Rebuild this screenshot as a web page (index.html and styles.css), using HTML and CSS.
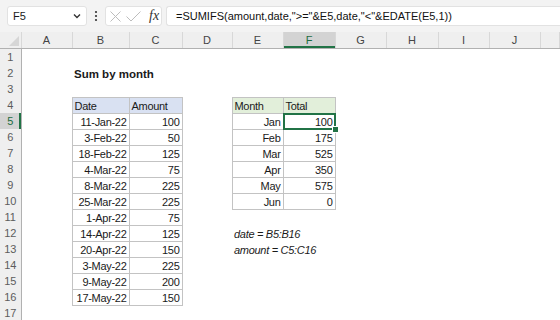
FILE: index.html
```html
<!DOCTYPE html>
<html lang="en">
<head>
    <meta charset="UTF-8">
    <title>Sum by month</title>
    <link rel="stylesheet" href="styles.css">
</head>
<body>
    <div class="topbar">
        <div class="namebox">
            <span>F5</span>
            <svg width="10" height="10" viewBox="0 0 10 10"><polyline points="2,3.5 5,6.5 8,3.5" fill="none" stroke="#333" stroke-width="1.4"/></svg>
        </div>
        <div class="dots">
            <svg width="4" height="12" viewBox="0 0 4 12"><circle cx="2" cy="2" r="1.1" fill="#333"/><circle cx="2" cy="6" r="1.1" fill="#333"/><circle cx="2" cy="10" r="1.1" fill="#333"/></svg>
        </div>
        <div class="fxbox">
            <svg class="cancel" width="11" height="11" viewBox="0 0 11 11"><path d="M0.5 0.5 L10.5 10.5 M10.5 0.5 L0.5 10.5" stroke="#bdbdbd" stroke-width="1"/></svg>
            <svg class="enter" width="15" height="11" viewBox="0 0 15 11"><polyline points="0.5,5.5 5,10 14.5,0.5" fill="none" stroke="#bdbdbd" stroke-width="1"/></svg>
            <span class="fx">fx</span>
        </div>
        <div class="formula">=SUMIFS(amount,date,"&gt;="&amp;E5,date,"&lt;"&amp;EDATE(E5,1))</div>
    </div>

    <table class="sheet">
        <colgroup>
            <col style="width:21px"><col style="width:51px"><col style="width:57px"><col style="width:53px">
            <col style="width:50px"><col style="width:51px"><col style="width:52px"><col style="width:51px">
            <col style="width:52px"><col style="width:51px"><col style="width:51px"><col>
        </colgroup>
        <thead>
            <tr>
                <th class="corner"><span class="tri"></span></th>
                <th>A</th><th>B</th><th>C</th><th>D</th><th>E</th>
                <th class="sel">F</th><th>G</th><th>H</th><th>I</th><th>J</th><th></th>
            </tr>
        </thead>
        <tbody>
            <tr><td class="rh">1</td></tr>
            <tr><td class="rh">2</td><td></td><td class="title" colspan="2">Sum by month</td></tr>
            <tr><td class="rh">3</td></tr>
            <tr><td class="rh">4</td><td></td><td class="box blue">Date</td><td class="box blue">Amount</td><td></td><td class="box green">Month</td><td class="box green">Total</td></tr>
            <tr><td class="rh sel">5</td><td></td><td class="box num">11-Jan-22</td><td class="box num">100</td><td></td><td class="box num">Jan</td><td class="box num active">100<span class="cursor"></span><span class="handle"></span></td></tr>
            <tr><td class="rh">6</td><td></td><td class="box num">3-Feb-22</td><td class="box num">50</td><td></td><td class="box num">Feb</td><td class="box num">175</td></tr>
            <tr><td class="rh">7</td><td></td><td class="box num">18-Feb-22</td><td class="box num">125</td><td></td><td class="box num">Mar</td><td class="box num">525</td></tr>
            <tr><td class="rh">8</td><td></td><td class="box num">4-Mar-22</td><td class="box num">75</td><td></td><td class="box num">Apr</td><td class="box num">350</td></tr>
            <tr><td class="rh">9</td><td></td><td class="box num">8-Mar-22</td><td class="box num">225</td><td></td><td class="box num">May</td><td class="box num">575</td></tr>
            <tr><td class="rh">10</td><td></td><td class="box num">25-Mar-22</td><td class="box num">225</td><td></td><td class="box num">Jun</td><td class="box num">0</td></tr>
            <tr><td class="rh">11</td><td></td><td class="box num">1-Apr-22</td><td class="box num">75</td></tr>
            <tr><td class="rh">12</td><td></td><td class="box num">14-Apr-22</td><td class="box num">125</td><td></td><td class="note">date = B5:B16</td></tr>
            <tr><td class="rh">13</td><td></td><td class="box num">20-Apr-22</td><td class="box num">150</td><td></td><td class="note">amount = C5:C16</td></tr>
            <tr><td class="rh">14</td><td></td><td class="box num">3-May-22</td><td class="box num">225</td></tr>
            <tr><td class="rh">15</td><td></td><td class="box num">9-May-22</td><td class="box num">200</td></tr>
            <tr><td class="rh">16</td><td></td><td class="box num">17-May-22</td><td class="box num">150</td></tr>
            <tr><td class="rh">17</td></tr>
        </tbody>
    </table>
</body>
</html>
```

FILE: styles.css
```css
body {
    margin: 0;
    background-color: #fff;
    font-family: "Liberation Sans", Arial, sans-serif;
    color: #1a1a1a;
    overflow: hidden;
}
/* Formula bar */
.topbar {
    height: 32px;
    box-sizing: border-box;
    background-color: #f3f3f3;
    display: flex;
    align-items: center;
    padding-left: 7px;
    font-size: 11px;
}
.namebox {
    width: 80px;
    height: 20px;
    box-sizing: border-box;
    background-color: #fff;
    border: 1px solid #e2e2e2;
    border-radius: 3px;
    display: flex;
    align-items: center;
    justify-content: space-between;
    padding: 0 4px 0 5px;
}
.dots {
    width: 18px;
    display: flex;
    justify-content: center;
}
.fxbox {
    width: 57px;
    height: 20px;
    box-sizing: border-box;
    background-color: #fff;
    border: 1px solid #e2e2e2;
    border-radius: 3px;
    display: flex;
    align-items: center;
    padding-left: 4px;
}
.fxbox .enter {
    margin-left: 5px;
}
.fx {
    font-family: "Liberation Serif", serif;
    font-style: italic;
    font-size: 14px;
    color: #333;
    margin-left: 8px;
}
.formula {
    flex: 1;
    height: 20px;
    box-sizing: border-box;
    margin-left: 4px;
    background-color: #fff;
    border: 1px solid #e2e2e2;
    border-right: none;
    border-radius: 3px 0 0 3px;
    padding-left: 9px;
    line-height: 18px;
    white-space: nowrap;
    color: #111;
}
/* Grid */
.sheet {
    border-collapse: collapse;
    table-layout: fixed;
    width: 560px;
}
.sheet th {
    height: 16px;
    padding: 0;
    background-color: #efefef;
    border-right: 1px solid #d8d8d8;
    border-bottom: 1px solid #b1b1b1;
    font-weight: normal;
    font-size: 11px;
    color: #444;
}
.sheet th.sel {
    background-color: #d3d3d3;
    color: #1d6b40;
    box-shadow: inset 0 -2px 0 #217346;
}
.corner {
    position: relative;
}
.tri {
    position: absolute;
    right: 2px;
    bottom: 2px;
    border-left: 10px solid transparent;
    border-bottom: 10px solid #d6d6d6;
}
.sheet td {
    height: 16px;
    padding: 0 2px;
    font-size: 11px;
    letter-spacing: -0.3px;
    line-height: 14px;
    white-space: nowrap;
    vertical-align: bottom;
}
.sheet td.rh {
    padding: 0;
    letter-spacing: 0;
    background-color: #efefef;
    border-right: 1px solid #b1b1b1;
    text-align: center;
    vertical-align: middle;
    color: #5c5c5c;
}
.sheet td.rh.sel {
    background-color: #d3d3d3;
    color: #1d6b40;
    box-shadow: inset -2px 0 0 #217346;
}
.sheet td.title {
    font-weight: bold;
    font-size: 11.5px;
    letter-spacing: 0;
}
.sheet td.box {
    height: 15px;
    border: 1px solid #c3c3c3;
}
.blue {
    background-color: #d9e1f2;
}
.green {
    background-color: #e2efda;
}
.num {
    text-align: right;
}
.note {
    font-style: italic;
}
.active {
    position: relative;
}
.cursor {
    position: absolute;
    left: -1px;
    top: -1px;
    right: -1px;
    bottom: -1px;
    border: 2px solid #217346;
}
.handle {
    position: absolute;
    right: -4px;
    bottom: -4px;
    width: 5px;
    height: 5px;
    background-color: #217346;
    border: 1px solid #fff;
}
```
